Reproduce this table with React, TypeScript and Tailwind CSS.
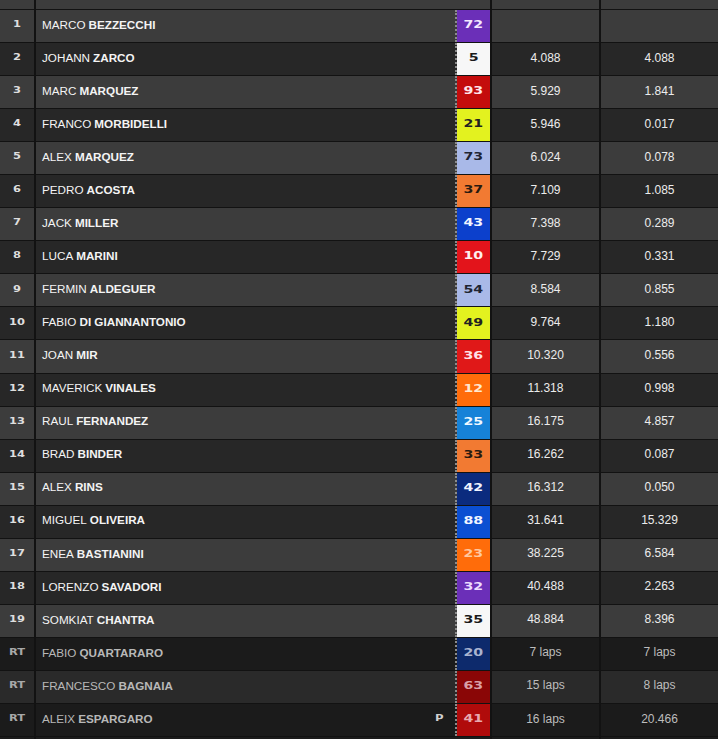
import React from "react";

type Row = {
  pos: string;
  first: string;
  last: string;
  num: string;
  badge: string;
  time: string;
  gap: string;
  rt?: boolean;
  p?: boolean;
};

const rows: Row[] = [
  { pos: "1", first: "MARCO", last: "BEZZECCHI", num: "72", badge: "bg-[#6b2fb8] text-[#f4e8ff]", time: "", gap: "" },
  { pos: "2", first: "JOHANN", last: "ZARCO", num: "5", badge: "bg-[#f7f7f7] text-[#1a1a1a]", time: "4.088", gap: "4.088" },
  { pos: "3", first: "MARC", last: "MARQUEZ", num: "93", badge: "bg-[#c40c0c] text-[#ffe4ea]", time: "5.929", gap: "1.841" },
  { pos: "4", first: "FRANCO", last: "MORBIDELLI", num: "21", badge: "bg-[#e3f21f] text-[#222222]", time: "5.946", gap: "0.017" },
  { pos: "5", first: "ALEX", last: "MARQUEZ", num: "73", badge: "bg-[#a9b9e8] text-[#1f2533]", time: "6.024", gap: "0.078" },
  { pos: "6", first: "PEDRO", last: "ACOSTA", num: "37", badge: "bg-[#f27a32] text-[#2a1a10]", time: "7.109", gap: "1.085" },
  { pos: "7", first: "JACK", last: "MILLER", num: "43", badge: "bg-[#0c40cc] text-[#f2f4ff]", time: "7.398", gap: "0.289" },
  { pos: "8", first: "LUCA", last: "MARINI", num: "10", badge: "bg-[#e3141b] text-[#fff0f0]", time: "7.729", gap: "0.331" },
  { pos: "9", first: "FERMIN", last: "ALDEGUER", num: "54", badge: "bg-[#a9b9e8] text-[#1f2533]", time: "8.584", gap: "0.855" },
  { pos: "10", first: "FABIO", last: "DI GIANNANTONIO", num: "49", badge: "bg-[#e3f21f] text-[#222222]", time: "9.764", gap: "1.180" },
  { pos: "11", first: "JOAN", last: "MIR", num: "36", badge: "bg-[#e01818] text-[#ffe0e6]", time: "10.320", gap: "0.556" },
  { pos: "12", first: "MAVERICK", last: "VINALES", num: "12", badge: "bg-[#ff6c0a] text-[#ffe8d0]", time: "11.318", gap: "0.998" },
  { pos: "13", first: "RAUL", last: "FERNANDEZ", num: "25", badge: "bg-[#1682d8] text-[#f0f8ff]", time: "16.175", gap: "4.857" },
  { pos: "14", first: "BRAD", last: "BINDER", num: "33", badge: "bg-[#f27a32] text-[#2a1a10]", time: "16.262", gap: "0.087" },
  { pos: "15", first: "ALEX", last: "RINS", num: "42", badge: "bg-[#0b2b7e] text-[#f0f4ff]", time: "16.312", gap: "0.050" },
  { pos: "16", first: "MIGUEL", last: "OLIVEIRA", num: "88", badge: "bg-[#0b4fd2] text-[#f0f4ff]", time: "31.641", gap: "15.329" },
  { pos: "17", first: "ENEA", last: "BASTIANINI", num: "23", badge: "bg-[#ff6c0a] text-[#ffc8a0]", time: "38.225", gap: "6.584" },
  { pos: "18", first: "LORENZO", last: "SAVADORI", num: "32", badge: "bg-[#6b2fb8] text-[#ecdcff]", time: "40.488", gap: "2.263" },
  { pos: "19", first: "SOMKIAT", last: "CHANTRA", num: "35", badge: "bg-[#f7f7f7] text-[#1a1a1a]", time: "48.884", gap: "8.396" },
  { pos: "RT", first: "FABIO", last: "QUARTARARO", num: "20", badge: "bg-[#0d2a6c] text-[#a9b4d0]", time: "7 laps", gap: "7 laps", rt: true },
  { pos: "RT", first: "FRANCESCO", last: "BAGNAIA", num: "63", badge: "bg-[#8a0606] text-[#d9a0a6]", time: "15 laps", gap: "8 laps", rt: true },
  { pos: "RT", first: "ALEIX", last: "ESPARGARO", num: "41", badge: "bg-[#b00b0b] text-[#e8aab0]", time: "16 laps", gap: "20.466", rt: true, p: true },
];

function RowView({ r, i }: { r: Row; i: number }) {
  const light = i % 2 === 0;
  const bg = r.rt
    ? light
      ? "bg-[#2a2a2a]"
      : "bg-[#1b1b1b]"
    : light
    ? "bg-[#3c3c3c]"
    : "bg-[#272727]";
  const nameColor = r.rt ? "text-[#b8b8b8]" : "text-[#f4f4f4]";
  const timeColor = r.rt ? "text-[#bdbdbd]" : "text-[#ececec]";
  return (
    <div className="grid h-[32.05px] grid-cols-[34px_1fr_107px_117px] gap-x-[2px]">
      <div
        className={`${bg} flex items-center justify-center pb-[3px] text-[8.5px] font-bold ${
          r.rt ? "text-[#a8a8a8]" : "text-[#dedede]"
        }`}
      >
        <span className="inline-block scale-x-[1.35]">{r.pos}</span>
      </div>
      <div className={`${bg} flex items-stretch`}>
        <div
          className={`flex flex-1 items-center pb-[3px] pl-[6px] text-[11.7px] ${nameColor} font-['Liberation_Sans',sans-serif]`}
        >
          <span className="font-normal">{r.first}</span>
          <span className="ml-[3px] font-bold">{r.last}</span>
          {r.p && (
            <span className="ml-auto mr-[12px] inline-block scale-x-[1.3] text-[9px] font-bold text-[#cfcfcf] font-['DejaVu_Sans',sans-serif]">
              P
            </span>
          )}
        </div>
        <div className="w-[2px] border-l-[2px] border-dotted border-[#8c8c8c]" />
        <div
          className={`${r.badge} flex w-[33px] items-center justify-center pb-[2px] text-[10.5px] font-bold font-['DejaVu_Sans',sans-serif]`}
        >
          <span className="inline-block scale-x-[1.35]">{r.num}</span>
        </div>
      </div>
      <div
        className={`${bg} flex items-center justify-center pb-[3px] text-[12px] ${timeColor} font-['Liberation_Sans',sans-serif]`}
      >
        {r.time}
      </div>
      <div
        className={`${bg} flex items-center justify-center pb-[3px] text-[12px] ${timeColor} font-['Liberation_Sans',sans-serif]`}
      >
        {r.gap}
      </div>
    </div>
  );
}

export default function App() {
  return (
    <div className="flex h-[739px] w-[718px] flex-col gap-y-[1px] overflow-hidden bg-[#121212] font-['DejaVu_Sans',sans-serif]">
      <div className="grid h-[9px] shrink-0 grid-cols-[34px_1fr_107px_117px] gap-x-[2px]">
        <div className="bg-[#3c3c3c]" />
        <div className="bg-[#3c3c3c]" />
        <div className="bg-[#3c3c3c]" />
        <div className="bg-[#3c3c3c]" />
      </div>
      {rows.map((r, i) => (
        <div key={i} className="shrink-0">
          <RowView r={r} i={i} />
        </div>
      ))}
      <div className="grid flex-1 grid-cols-[34px_1fr_107px_117px] gap-x-[2px]">
        <div className="bg-[#1b1b1b]" />
        <div className="bg-[#1b1b1b]" />
        <div className="bg-[#1b1b1b]" />
        <div className="bg-[#1b1b1b]" />
      </div>
    </div>
  );
}
